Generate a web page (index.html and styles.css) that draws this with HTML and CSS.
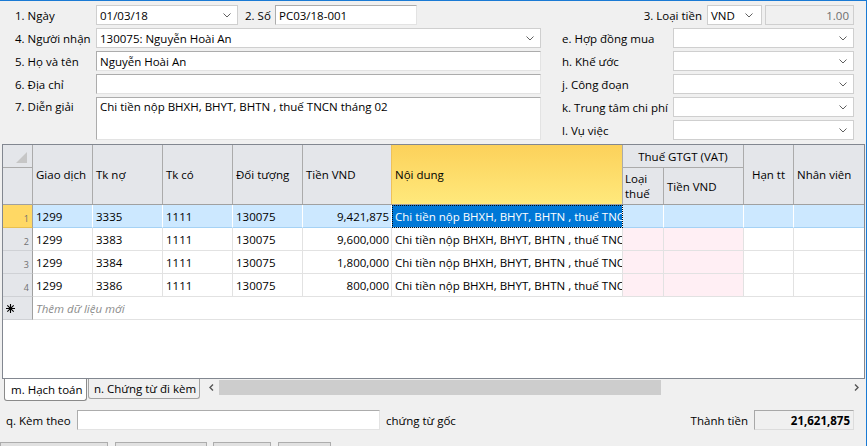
FILE: index.html
```html
<!DOCTYPE html>
<html lang="vi">
<head>
<meta charset="utf-8">
<title>Phiếu chi</title>
<link rel="stylesheet" href="styles.css">
</head>
<body>
<div class="window">
  <div class="form">
    <div class="row row1">
      <div class="lbl-main">1. Ngày</div>
      <div class="field combo w-date"><span>01/03/18</span><svg class="dd" width="8" height="5" viewBox="0 0 8 5"><path d="M0.5 0.5 L4 4 L7.5 0.5" fill="none" stroke="#606060"/></svg></div>
      <div class="lbl-so">2. Số</div>
      <div class="field input w-so"><span>PC03/18-001</span></div>
      <div class="spacer"></div>
      <div class="lbl-tien">3. Loại tiền</div>
      <div class="field combo w-vnd"><span>VND</span><svg class="dd" width="8" height="5" viewBox="0 0 8 5"><path d="M0.5 0.5 L4 4 L7.5 0.5" fill="none" stroke="#606060"/></svg></div>
      <div class="field rate">1.00</div>
    </div>
    <div class="cols">
      <div class="col-left">
        <div class="row">
          <div class="lbl-main">4. Người nhận</div>
          <div class="field combo w-wide"><span>130075: Nguyễn Hoài An</span><svg class="dd" width="8" height="5" viewBox="0 0 8 5"><path d="M0.5 0.5 L4 4 L7.5 0.5" fill="none" stroke="#606060"/></svg></div>
        </div>
        <div class="row">
          <div class="lbl-main">5. Họ và tên</div>
          <div class="field input w-wide"><span>Nguyễn Hoài An</span></div>
        </div>
        <div class="row">
          <div class="lbl-main">6. Địa chỉ</div>
          <div class="field input w-wide"></div>
        </div>
        <div class="row row-tall">
          <div class="lbl-main lbl-top">7. Diễn giải</div>
          <div class="field input textarea w-wide">Chi tiền nộp BHXH, BHYT, BHTN , thuế TNCN tháng 02</div>
        </div>
      </div>
      <div class="col-right">
        <div class="row">
          <div class="lbl-right">e. Hợp đồng mua</div>
          <div class="field combo w-right"><svg class="dd" width="8" height="5" viewBox="0 0 8 5"><path d="M0.5 0.5 L4 4 L7.5 0.5" fill="none" stroke="#606060"/></svg></div>
        </div>
        <div class="row">
          <div class="lbl-right">h. Khế ước</div>
          <div class="field combo w-right"><svg class="dd" width="8" height="5" viewBox="0 0 8 5"><path d="M0.5 0.5 L4 4 L7.5 0.5" fill="none" stroke="#606060"/></svg></div>
        </div>
        <div class="row">
          <div class="lbl-right">j. Công đoạn</div>
          <div class="field combo w-right"><svg class="dd" width="8" height="5" viewBox="0 0 8 5"><path d="M0.5 0.5 L4 4 L7.5 0.5" fill="none" stroke="#606060"/></svg></div>
        </div>
        <div class="row">
          <div class="lbl-right">k. Trung tâm chi phí</div>
          <div class="field combo w-right"><svg class="dd" width="8" height="5" viewBox="0 0 8 5"><path d="M0.5 0.5 L4 4 L7.5 0.5" fill="none" stroke="#606060"/></svg></div>
        </div>
        <div class="row">
          <div class="lbl-right">l. Vụ việc</div>
          <div class="field combo w-right"><svg class="dd" width="8" height="5" viewBox="0 0 8 5"><path d="M0.5 0.5 L4 4 L7.5 0.5" fill="none" stroke="#606060"/></svg></div>
        </div>
      </div>
    </div>
  </div>

  <div class="grid">
    <div class="ghead">
      <div class="hc c-rh corner">
        <div class="corner-top"><svg width="11" height="11" viewBox="0 0 11 11"><path d="M11 0 L11 11 L0 11 Z" fill="#c6c6c6"/></svg></div>
        <div class="corner-bot"></div>
      </div>
      <div class="hc c-gd">Giao dịch</div>
      <div class="hc c-tkn">Tk nợ</div>
      <div class="hc c-tkc">Tk có</div>
      <div class="hc c-dt">Đối tượng</div>
      <div class="hc c-tien">Tiền VND</div>
      <div class="hc c-nd hl">Nội dung</div>
      <div class="hgroup">
        <div class="hg-top">Thuế GTGT (VAT)</div>
        <div class="hg-sub">
          <div class="hc c-lt two">Loại<br>thuế</div>
          <div class="hc c-tv">Tiền VND</div>
        </div>
      </div>
      <div class="hc c-han center">Hạn tt</div>
      <div class="hc c-nv last">Nhân viên</div>
    </div>

    <div class="grow sel">
      <div class="rc c-rh rh-sel">1</div>
      <div class="dc c-gd">1299</div>
      <div class="dc c-tkn">3335</div>
      <div class="dc c-tkc">1111</div>
      <div class="dc c-dt">130075</div>
      <div class="dc c-tien num">9,421,875</div>
      <div class="dc c-nd focus">Chi tiền nộp BHXH, BHYT, BHTN , thuế TNCN tháng 02</div>
      <div class="dc c-lt"></div>
      <div class="dc c-tv"></div>
      <div class="dc c-han"></div>
      <div class="dc c-nv last"></div>
    </div>
    <div class="grow">
      <div class="rc c-rh">2</div>
      <div class="dc c-gd">1299</div>
      <div class="dc c-tkn">3383</div>
      <div class="dc c-tkc">1111</div>
      <div class="dc c-dt">130075</div>
      <div class="dc c-tien num">9,600,000</div>
      <div class="dc c-nd">Chi tiền nộp BHXH, BHYT, BHTN , thuế TNCN tháng 02</div>
      <div class="dc c-lt pk"></div>
      <div class="dc c-tv pk"></div>
      <div class="dc c-han"></div>
      <div class="dc c-nv last"></div>
    </div>
    <div class="grow">
      <div class="rc c-rh">3</div>
      <div class="dc c-gd">1299</div>
      <div class="dc c-tkn">3384</div>
      <div class="dc c-tkc">1111</div>
      <div class="dc c-dt">130075</div>
      <div class="dc c-tien num">1,800,000</div>
      <div class="dc c-nd">Chi tiền nộp BHXH, BHYT, BHTN , thuế TNCN tháng 02</div>
      <div class="dc c-lt pk"></div>
      <div class="dc c-tv pk"></div>
      <div class="dc c-han"></div>
      <div class="dc c-nv last"></div>
    </div>
    <div class="grow">
      <div class="rc c-rh">4</div>
      <div class="dc c-gd">1299</div>
      <div class="dc c-tkn">3386</div>
      <div class="dc c-tkc">1111</div>
      <div class="dc c-dt">130075</div>
      <div class="dc c-tien num">800,000</div>
      <div class="dc c-nd">Chi tiền nộp BHXH, BHYT, BHTN , thuế TNCN tháng 02</div>
      <div class="dc c-lt pk"></div>
      <div class="dc c-tv pk"></div>
      <div class="dc c-han"></div>
      <div class="dc c-nv last"></div>
    </div>
    <div class="grow newrow">
      <div class="rc c-rh star"><svg width="9" height="9" viewBox="0 0 9 9"><path d="M4.5 0 V9 M0 4.5 H9 M1.3 1.3 L7.7 7.7 M7.7 1.3 L1.3 7.7" stroke="#000" stroke-width="1.1"/></svg></div>
      <div class="dc add">Thêm dữ liệu mới</div>
    </div>
  </div>

  <div class="tabbar">
    <div class="tab active">m. Hạch toán</div>
    <div class="tab">n. Chứng từ đi kèm</div>
    <div class="hscroll">
      <div class="sbtn"><svg width="5" height="7" viewBox="0 0 5 7"><path d="M4 0.5 L1 3.5 L4 6.5" fill="none" stroke="#555" stroke-width="1.4"/></svg></div>
      <div class="track"><div class="thumb"></div></div>
      <div class="sbtn"><svg width="5" height="7" viewBox="0 0 5 7"><path d="M1 0.5 L4 3.5 L1 6.5" fill="none" stroke="#555" stroke-width="1.4"/></svg></div>
    </div>
  </div>

  <div class="footer">
    <div class="lbl-kem">q. Kèm theo</div>
    <div class="field input w-kem"></div>
    <div class="lbl-goc">chứng từ gốc</div>
    <div class="spacer"></div>
    <div class="lbl-total">Thành tiền</div>
    <div class="field total">21,621,875</div>
  </div>

  <div class="btns">
    <div class="btn b1"></div>
    <div class="btn b2"></div>
    <div class="btn b3"></div>
    <div class="btn b4"></div>
  </div>
</div>
</body>
</html>
```

FILE: styles.css
```css
* { box-sizing: border-box; }
html, body { margin: 0; padding: 0; }
body {
  font-family: "Open Sans", "Noto Sans", sans-serif;
  font-size: 11.5px;
  color: #000;
  background: #f0f0f0;
  overflow: hidden;
}
.window {
  width: 867px;
  height: 446px;
  overflow: hidden;
  border-top: 1px solid #1a7ad4;
  border-right: 1px solid #1a7ad4;
  background: #f0f0f0;
}

/* ---------- top form ---------- */
.form { padding: 4px 12px 0 0; }
.row { display: flex; align-items: center; height: 20px; margin-bottom: 3px; white-space: nowrap; }
.row-tall { height: 43px; align-items: flex-start; margin-bottom: 0; }
.col-right .row:last-child { margin-bottom: 0; }
.spacer { flex: 1; }
.lbl-main { width: 96px; flex: none; padding-left: 15px; }
.lbl-top { padding-top: 2px; }
.lbl-so { width: 37px; flex: none; padding-left: 7px; }
.lbl-tien { margin-right: 5px; }
.lbl-right { width: 111px; flex: none; }
.cols { display: flex; }
.col-left { width: 541px; flex: none; }
.col-right { margin-left: 21px; }

.field {
  height: 20px;
  background: #fff;
  border: 1px solid #cfcfcf;
  display: flex;
  align-items: center;
  padding: 0 3px;
  white-space: nowrap;
  overflow: hidden;
  flex: none;
}
.input { border-color: #acacac #e3e3e3 #e3e3e3 #acacac; }
.combo { padding-right: 6px; }
.combo .dd { margin-left: auto; flex: none; }
.textarea { height: 43px; align-items: flex-start; padding-top: 1px; }
.w-date { width: 142px; }
.w-so { width: 142px; }
.w-vnd { width: 55px; padding-right: 8px; }
.rate {
  width: 89px;
  margin-left: 3px;
  background: #f0f0f0;
  border-color: #cfcfcf;
  justify-content: flex-end;
  padding-right: 4px;
  color: #6d6d6d;
}
.w-wide { width: 445px; }
.w-right { width: 181px; }

/* ---------- grid ---------- */
.grid {
  margin: 4px 0 0 2px;
  width: 863px;
  height: 235px;
  border: 1px solid #828790;
  background: #fff;
  overflow: hidden;
}
.ghead {
  display: flex;
  height: 60px;
  background: #e4e6ea;
  border-bottom: 1px solid #a0a0a0;
}
.hc {
  flex: none;
  display: flex;
  align-items: center;
  padding-left: 3px;
  border-right: 1px solid #ababab;
  white-space: nowrap;
}
.hc.center { justify-content: center; padding-left: 0; }
.hc.last { border-right: none; }
.hc.hl {
  background: linear-gradient(#fcd15a, #ffe97c);
  border-left: 1px solid #eec25a;
  margin-left: -1px;
  width: 232px;
}
.hc.two { line-height: 15px; padding-left: 2px; }
.corner { flex-direction: column; align-items: stretch; padding: 0; }
.corner-top {
  height: 23px;
  border-bottom: 1px solid #ababab;
  display: flex;
  justify-content: flex-end;
  align-items: flex-end;
  padding: 0 5px 4px 0;
}
.corner-bot { flex: 1; }
.hgroup { width: 121px; flex: none; display: flex; flex-direction: column; border-right: 1px solid #ababab; }
.hg-top {
  height: 23px;
  border-bottom: 1px solid #ababab;
  display: flex;
  align-items: center;
  justify-content: center;
}
.hg-sub { flex: 1; display: flex; }
.hg-sub .hc:last-child { border-right: none; }

.c-rh { width: 30px; }
.c-gd { width: 60px; }
.c-tkn { width: 70px; }
.c-tkc { width: 70px; }
.c-dt { width: 70px; }
.c-tien { width: 89px; }
.c-nd { width: 231px; }
.c-lt { width: 41px; }
.c-tv { width: 80px; }
.hg-sub .c-tv { width: 79px; }
.c-han { width: 50px; }
.c-nv { width: 70px; }

.grow { display: flex; height: 23px; }
.rc {
  flex: none;
  height: 23px;
  background: #e4e6ea;
  border-right: 1px solid #a0a0a0;
  border-bottom: 1px solid #cfd1d5;
  display: flex;
  align-items: flex-end;
  justify-content: flex-end;
  padding: 0 3px 3px 0;
  font-size: 9px;
  line-height: 10px;
  color: #707070;
}
.rc.rh-sel { background: #ffd864; border-bottom-color: #e8c050; }
.rc.star { justify-content: flex-start; align-items: center; padding: 0 0 0 3px; }
.dc {
  flex: none;
  height: 23px;
  border-right: 1px solid #e2e2e2;
  border-bottom: 1px solid #e2e2e2;
  padding: 0 2px 0 3px;
  display: flex;
  align-items: center;
  white-space: nowrap;
  overflow: hidden;
}
.dc.num { justify-content: flex-end; padding-right: 2px; }
.dc.last { border-right: none; }
.dc.pk { background: #ffeff4; }
.sel .dc { background: #cce8ff; border-right-color: #fff; border-bottom-color: #a5d2f5; }
.sel .dc.focus {
  background: #0078d7;
  color: #fff;
  outline: 1px dotted #0a0a0a;
  outline-offset: -1px;
}
.dc.add { flex: 1; font-style: italic; color: #8c8c8c; border-right: none; }

/* ---------- tabs ---------- */
.tabbar { display: flex; align-items: flex-start; height: 23px; padding-left: 4px; }
.tab {
  flex: none;
  height: 20px;
  width: 112px;
  margin-left: 1px;
  padding-left: 5px;
  display: flex;
  align-items: center;
  border: 1px solid #a3a3a3;
  border-top: none;
  border-radius: 0 0 3px 3px;
  background: #f0f0f0;
  white-space: nowrap;
}
.tab.active {
  margin-left: 0;
  width: 83px;
  height: 22px;
  padding-left: 6px;
  background: #fff;
  border-color: #8a8a8a;
}
.hscroll { flex: 1; display: flex; height: 15px; margin: 1px 2px 0 3px; }
.sbtn { width: 16px; flex: none; display: flex; align-items: center; justify-content: center; }
.track { flex: 1; display: flex; }
.thumb { width: 442px; background: #cdcdcd; }

/* ---------- footer ---------- */
.footer { display: flex; align-items: center; height: 20px; margin-top: 8px; padding: 0 12px 0 6px; white-space: nowrap; }
.lbl-kem { width: 71px; flex: none; }
.w-kem { width: 303px; }
.lbl-goc { margin-left: 6px; }
.lbl-total { margin-right: 6px; }
.total {
  width: 100px;
  background: #f0f0f0;
  border-color: #a8a8a8 #dcdcdc #dcdcdc #a8a8a8;
  justify-content: flex-end;
  font-weight: bold;
  padding-right: 3px;
}

.btns { display: flex; margin-top: 12px; }
.btn { height: 24px; background: #e1e1e1; border: 1px solid #adadad; flex: none; }
.b1 { width: 108px; }
.b2 { width: 92px; margin-left: 7px; }
.b3 { width: 58px; margin-left: 6px; }
.b4 { width: 53px; margin-left: 7px; }
```
